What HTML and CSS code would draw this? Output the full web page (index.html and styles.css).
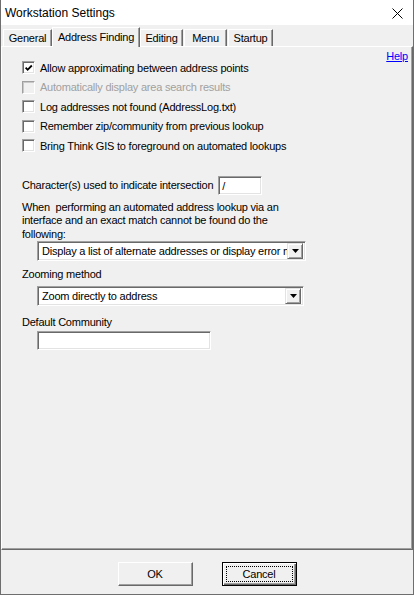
FILE: index.html
```html
<!DOCTYPE html>
<html lang="en">
<head>
    <meta charset="UTF-8">
    <title>Workstation Settings</title>
    <link rel="stylesheet" href="styles.css">
</head>
<body>
    <div class="window">
        <div class="titlebar">
            <span class="title">Workstation Settings</span>
            <svg class="close" width="11" height="11" viewBox="0 0 11 11">
                <path d="M0.5 0.5 L10.5 10.5 M10.5 0.5 L0.5 10.5" stroke="#000" stroke-width="1" fill="none"/>
            </svg>
        </div>

        <div class="tabs">
            <div class="tab tab-general">General</div>
            <div class="tab selected tab-address">Address Finding</div>
            <div class="tab tab-editing">Editing</div>
            <div class="tab tab-menu">Menu</div>
            <div class="tab tab-startup">Startup</div>
        </div>

        <div class="panel">
            <div class="help-row"><a class="help" href="#">Help</a></div>

            <div class="checks">
                <div class="check-row">
                    <span class="checkbox">
                        <svg width="11" height="11" viewBox="0 0 11 11"><path d="M1.8 4.6 L4 6.9 L8.6 2.2" stroke="#000" stroke-width="2" fill="none"/></svg>
                    </span>
                    <span>Allow approximating between address points</span>
                </div>
                <div class="check-row disabled">
                    <span class="checkbox"></span>
                    <span>Automatically display area search results</span>
                </div>
                <div class="check-row">
                    <span class="checkbox"></span>
                    <span>Log addresses not found (AddressLog.txt)</span>
                </div>
                <div class="check-row">
                    <span class="checkbox"></span>
                    <span>Remember zip/community from previous lookup</span>
                </div>
                <div class="check-row">
                    <span class="checkbox"></span>
                    <span>Bring Think GIS to foreground on automated lookups</span>
                </div>
            </div>

            <div class="field-row">
                <span>Character(s) used to indicate intersection</span>
                <span class="textbox small">/</span>
            </div>

            <p class="desc">When &nbsp;performing an automated address lookup via an<br>interface and an exact match cannot be found do the<br>following:</p>

            <div class="select wide">
                <span class="select-text">Display a list of alternate addresses or display error message</span>
                <span class="arrow"><svg width="7" height="4" viewBox="0 0 7 4"><path d="M0 0 H7 L3.5 4 Z" fill="#000"/></svg></span>
            </div>

            <div class="label zoom-label">Zooming method</div>
            <div class="select zoom-select">
                <span class="select-text">Zoom directly to address</span>
                <span class="arrow"><svg width="7" height="4" viewBox="0 0 7 4"><path d="M0 0 H7 L3.5 4 Z" fill="#000"/></svg></span>
            </div>

            <div class="label community-label">Default Community</div>
            <div class="textbox community"></div>
        </div>

        <div class="footer">
            <button class="btn">OK</button>
            <button class="btn default"><span class="focus">Cancel</span></button>
        </div>
    </div>
</body>
</html>
```

FILE: styles.css
```css
* {
    box-sizing: border-box;
}
body {
    margin: 0;
    background-color: #f0f0f0;
    font-family: "Liberation Sans", Arial, sans-serif;
    font-size: 11px;
    letter-spacing: -0.22px;
    color: #000;
}
.window {
    width: 414px;
    height: 595px;
    display: flex;
    flex-direction: column;
    border: 1px solid #6e6e6e;
    border-top: none;
    background-color: #f0f0f0;
}
.titlebar {
    height: 25px;
    flex: none;
    display: flex;
    align-items: center;
    justify-content: space-between;
    padding: 1px 10px 0 4px;
    background-color: #fff;
    font-size: 12px;
    letter-spacing: 0;
}
.close {
    display: block;
}

/* tabs */
.tabs {
    height: 21px;
    flex: none;
    display: flex;
    align-items: flex-end;
    padding-left: 2px;
}
.tab {
    height: 17px;
    line-height: 16px;
    text-align: center;
    border-top: 1px solid #fff;
    border-left: 1px solid #fff;
    border-right: 1px solid #696969;
    box-shadow: inset -1px 0 #a0a0a0;
    background-color: #f0f0f0;
}
.tab.selected {
    height: 20px;
    line-height: 18px;
    margin-bottom: -1px;
    position: relative;
    z-index: 1;
}
.tab-general { width: 49px; }
.tab-address { width: 88px; }
.tab-editing { width: 43px; }
.tab-menu { width: 43px; margin-left: 1px; }
.tab-startup { width: 45px; margin-left: 1px; }

/* panel */
.panel {
    height: 504px;
    flex: none;
    padding: 3px 4px 0 20px;
    border-top: 1px solid #fff;
    border-left: 1px solid #fff;
    border-right: 1px solid #696969;
    border-bottom: 1px solid #696969;
    box-shadow: inset -1px -1px #a0a0a0;
}
.help-row {
    text-align: right;
    line-height: 12px;
    height: 12px;
}
.help {
    color: #0000ff;
    text-decoration: underline;
}
.checks {
    margin-top: -4px;
}
.check-row {
    height: 19.5px;
    display: flex;
    align-items: center;
    gap: 5px;
}
.checkbox,
.textbox,
.select {
    background-color: #fff;
    border-top: 1px solid #a0a0a0;
    border-left: 1px solid #a0a0a0;
    border-bottom: 1px solid #fff;
    border-right: 1px solid #fff;
    box-shadow: inset 1px 1px #696969, inset -1px -1px #e3e3e3;
}
.checkbox {
    width: 13px;
    height: 13px;
    flex: none;
    display: flex;
    align-items: center;
    justify-content: center;
    padding: 1px 0 0 1px;
}
.check-row.disabled {
    color: #a0a0a0;
}
.check-row.disabled .checkbox {
    background-color: #f0f0f0;
    box-shadow: inset 1px 1px #c8c8c8;
}

.field-row {
    display: flex;
    align-items: center;
    gap: 5px;
    margin-top: 20px;
}
.textbox {
    height: 19px;
    padding: 2px 3px;
    line-height: 14px;
}
.textbox.small {
    width: 44px;
}
.desc {
    margin: 6px 0 0 0;
    line-height: 13.5px;
}

.select {
    height: 20px;
    margin-left: 15px;
    display: flex;
    align-items: center;
    padding: 2px;
}
.select.wide {
    width: 269px;
}
.select.zoom-select {
    width: 267px;
    margin-top: 4px;
}
.select-text {
    flex: 1;
    white-space: nowrap;
    overflow: hidden;
    padding-left: 2px;
    line-height: 16px;
}
.arrow {
    width: 16px;
    height: 16px;
    flex: none;
    display: flex;
    align-items: center;
    justify-content: center;
    background-color: #f0f0f0;
    border-top: 1px solid #e3e3e3;
    border-left: 1px solid #e3e3e3;
    border-right: 1px solid #696969;
    border-bottom: 1px solid #696969;
    box-shadow: inset 1px 1px #fff, inset -1px -1px #a0a0a0;
}
.label {
    line-height: 13.5px;
}
.zoom-label {
    margin-top: 7px;
}
.community-label {
    margin-top: 10px;
}
.textbox.community {
    width: 174px;
    margin: 2px 0 0 15px;
}

/* buttons */
.footer {
    flex: 1;
    display: flex;
    justify-content: center;
    gap: 29px;
    padding-top: 12px;
}
.btn {
    width: 75px;
    height: 24px;
    padding: 0;
    font-family: inherit;
    font-size: 11px;
    letter-spacing: inherit;
    color: #000;
    background-color: #f0f0f0;
    border-top: 1px solid #fff;
    border-left: 1px solid #fff;
    border-right: 1px solid #696969;
    border-bottom: 1px solid #696969;
    box-shadow: inset -1px -1px #a0a0a0;
}
.btn.default {
    border: 1px solid #000;
    padding: 3px;
    box-shadow: inset 1px 1px #fff, inset -1px -1px #696969, inset -2px -2px #a0a0a0;
}
.focus {
    display: block;
    height: 100%;
    line-height: 14px;
    border: 1px dotted #000;
}
```
